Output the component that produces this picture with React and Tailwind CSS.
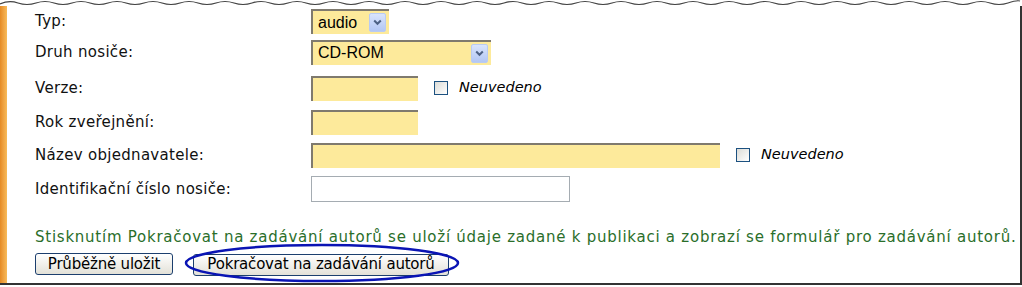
import React from "react";

const font = { fontFamily: '"DejaVu Sans", Verdana, sans-serif' };
const arial = { fontFamily: '"Liberation Sans", Arial, sans-serif' };

function Arrow() {
  return (
    <span className="flex h-[19px] w-[17px] items-center justify-center rounded-[2px] border border-[#b9cbf3] bg-gradient-to-b from-[#d9e4fc] to-[#b3c7f4]">
      <svg width="9" height="7" viewBox="0 0 9 7">
        <path d="M1.2 1.5 L4.5 4.8 L7.8 1.5" fill="none" stroke="#4d6185" strokeWidth="2" />
      </svg>
    </span>
  );
}

function Select({ w, text }) {
  return (
    <div
      className={`flex h-[25px] items-center justify-between border-t-2 border-l-2 border-t-[#7f7a6e] border-l-[#7f7a6e] bg-[#fdea9b] pl-[5px] pr-[3px] text-[16px] text-black ${w}`}
      style={arial}
    >
      <span>{text}</span>
      <Arrow />
    </div>
  );
}

function Input({ w }) {
  return (
    <div className={`h-[25px] border-t-2 border-l-2 border-t-[#7f7a6e] border-l-[#7f7a6e] bg-[#fdea9b] ${w}`} />
  );
}

function Neuvedeno({ ml }) {
  return (
    <div className={`flex items-center gap-[11px] ${ml}`}>
      <span className="h-[14px] w-[14px] border border-[#1c5180] bg-gradient-to-br from-[#dcdcd7] to-white" />
      <span className="text-[14.5px] italic text-black">Neuvedeno</span>
    </div>
  );
}

function Row({ label, h, children }) {
  return (
    <div className={`flex items-center ${h}`}>
      <div className="w-[276px] text-[15px] tracking-[0.3px] text-[#111]">{label}</div>
      {children}
    </div>
  );
}

export default function App() {
  return (
    <div className="h-[287px] w-[1022px] overflow-hidden bg-white" style={font}>
      <svg width="1022" height="6" viewBox="0 0 1022 6" className="block">
        <path
          d="M0 4 Q 9 0 18 3 T 36 3 T 54 3 T 72 3 T 90 3 T 108 3 T 126 3 T 144 3 T 162 3 T 180 3 T 198 3 T 216 3 T 234 3 T 252 3 T 270 3 T 288 3 T 306 3 T 324 3 T 342 3 T 360 3 T 378 3 T 396 3 T 414 3 T 432 3 T 450 3 T 468 3 T 486 3 T 504 3 T 522 3 T 540 3 T 558 3 T 576 3 T 594 3 T 612 3 T 630 3 T 648 3 T 666 3 T 684 3 T 702 3 T 720 3 T 738 3 T 756 3 T 774 3 T 792 3 T 810 3 T 828 3 T 846 3 T 864 3 T 882 3 T 900 3 T 918 3 T 936 3 T 954 3 T 972 3 T 990 3 T 1008 3 T 1020 1"
          fill="none"
          stroke="#444"
          strokeWidth="1.2"
        />
      </svg>
      <div className="flex h-[279px] border-r-2 border-b-2 border-[#333]">
        <div className="w-[7px] bg-gradient-to-r from-[#e58a22] to-[#f8bb5a]" />
        <div className="flex-1 pl-[28px] pt-[2px]">
          <Row label="Typ:" h="h-[27px]">
            <Select w="w-[78px]" text="audio" />
          </Row>
          <Row label="Druh nosiče:" h="h-[34px]">
            <Select w="w-[180px]" text="CD-ROM" />
          </Row>
          <Row label="Verze:" h="h-[38px]">
            <Input w="w-[107px]" />
            <Neuvedeno ml="ml-[16px]" />
          </Row>
          <Row label="Rok zveřejnění:" h="h-[30px]">
            <Input w="w-[107px]" />
          </Row>
          <Row label="Název objednavatele:" h="h-[36px]">
            <Input w="w-[409px]" />
            <Neuvedeno ml="ml-[16px]" />
          </Row>
          <Row label="Identifikační číslo nosiče:" h="h-[32px]">
            <div className="h-[26px] w-[259px] border border-[#a5acb2] bg-white" />
          </Row>
          <div className="mt-[23px] whitespace-nowrap text-[15px] leading-[18px] tracking-[0.75px] text-[#2a6e2a]">
            Stisknutím Pokračovat na zadávání autorů se uloží údaje zadané k publikaci a zobrazí se formulář pro zadávání autorů.
          </div>
          <div className="mt-[6px] flex items-center gap-[20px]">
            <button className="h-[22px] w-[138px] rounded-[3px] border border-[#1c3f6e] bg-gradient-to-b from-white to-[#e3e1d8] text-[15px] leading-none tracking-[-0.2px] text-black">
              Průběžně uložit
            </button>
            <div className="relative">
              <button className="h-[22px] w-[256px] rounded-[3px] border border-[#1c3f6e] bg-gradient-to-b from-white to-[#e3e1d8] text-[15px] leading-none tracking-[-0.2px] text-black">
                Pokračovat na zadávání autorů
              </button>
              <svg className="pointer-events-none absolute left-[-9px] top-[-9px]" width="276" height="40" viewBox="0 0 276 40">
                <ellipse cx="138" cy="20" rx="136" ry="18" fill="none" stroke="#0a14b4" strokeWidth="2.5" />
              </svg>
            </div>
          </div>
        </div>
      </div>
    </div>
  );
}
